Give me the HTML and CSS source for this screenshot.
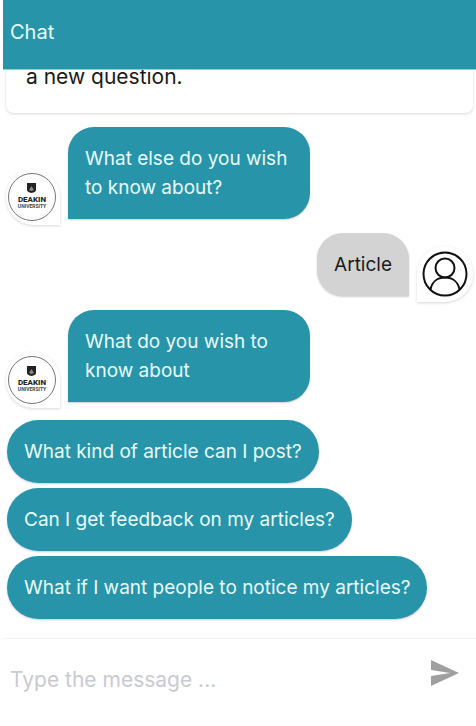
FILE: index.html
```html
<!DOCTYPE html>
<html lang="en">
<head>
  <meta charset="utf-8">
  <meta name="viewport" content="width=device-width, initial-scale=1">
  <title>Chat</title>
  <link rel="stylesheet" href="styles.css">
</head>
<body>
  <main class="chat">
    <header class="chat-header"><h1>Chat</h1></header>
    <section class="messages">
      <p class="card">a new question.</p>
      <div class="row">
        <div class="avatar">
          <svg viewBox="0 0 48 48" role="img" aria-label="Deakin University">
            <circle cx="24" cy="24" r="23.500" fill="#fff" stroke="#777"/>
            <path d="M19 10h9v7q0 2-4.500 3-4.500-1-4.500-3z" fill="#222"/>
            <path d="M21 17l2.500-4 2.500 4-2.500 1z" fill="#888"/>
            <text class="crest-name" x="24" y="29" text-anchor="middle">DEAKIN</text>
            <text class="crest-sub" x="24" y="35" text-anchor="middle">UNIVERSITY</text>
          </svg>
        </div>
        <p class="bubble">What else do you wish to know about?</p>
      </div>
      <div class="row row-user">
        <p class="bubble bubble-user">Article</p>
        <div class="avatar avatar-user">
          <svg viewBox="0 0 48 48" fill="none" stroke="#111" stroke-width="2" aria-hidden="true">
            <circle cx="24" cy="24" r="21.500"/>
            <circle cx="24" cy="18" r="9.500"/>
            <path d="M9.500 39.500C11 31.500 17 27.500 24 27.500s13 4 14.500 12"/>
          </svg>
        </div>
      </div>
      <div class="row">
        <div class="avatar">
          <svg viewBox="0 0 48 48" role="img" aria-label="Deakin University">
            <circle cx="24" cy="24" r="23.500" fill="#fff" stroke="#777"/>
            <path d="M19 10h9v7q0 2-4.500 3-4.500-1-4.500-3z" fill="#222"/>
            <path d="M21 17l2.500-4 2.500 4-2.500 1z" fill="#888"/>
            <text class="crest-name" x="24" y="29" text-anchor="middle">DEAKIN</text>
            <text class="crest-sub" x="24" y="35" text-anchor="middle">UNIVERSITY</text>
          </svg>
        </div>
        <p class="bubble">What do you wish to know about</p>
      </div>
      <div class="options">
        <button type="button">What kind of article can I post?</button>
        <button type="button">Can I get feedback on my articles?</button>
        <button type="button">What if I want people to notice my articles?</button>
      </div>
    </section>
    <form class="composer">
      <input type="text" placeholder="Type the message ..." aria-label="Message">
      <button type="button" aria-label="Send">
        <svg viewBox="0 0 28 26" aria-hidden="true"><path d="M0 0l28 13L0 26V16l19-3L0 10z" fill="#a0a0a0"/></svg>
      </button>
    </form>
  </main>
</body>
</html>
```
FILE: styles.css
```css
* {
  box-sizing: border-box;
}

body {
  margin: 0;
  padding: 0 0 13px 3px;
  height: 100vh;
  background: #fff;
  font: 19px/29px Inter, "Liberation Sans", sans-serif;
  color: #1a1a1a;
}

.chat {
  display: flex;
  flex-direction: column;
  height: 100%;
}

.chat-header {
  padding: 18px 7px 22px;
  background: #2794a9;
  border-bottom: 1px solid #8fd0de;
  color: #e8fcff;
}

h1 {
  margin: 0;
  font-size: 20px;
  font-weight: 400;
}

.messages {
  flex: 1;
  min-height: 0;
  display: flex;
  flex-direction: column;
  justify-content: flex-end;
  gap: 8px;
  padding: 0 3px 19px;
  overflow: hidden;
}

.card {
  margin: 0 0 6px;
  padding: 22px 20px;
  border-radius: 8px;
  box-shadow: 0 1px 3px rgba(0, 0, 0, 0.16);
  font-size: 21px;
}

.row {
  display: flex;
  align-items: flex-end;
  gap: 8px;
}

.row-user {
  justify-content: flex-end;
}

.avatar {
  display: flex;
  padding: 4px 4px 4px 2px;
  border-radius: 50% 50% 0 50%;
  box-shadow: 0 1px 3px rgba(0, 0, 0, 0.16);
}

.avatar svg {
  width: 48px;
  height: 48px;
}

.avatar-user {
  padding: 4px;
  border-radius: 50% 50% 50% 0;
}

.crest-name {
  font: 800 8px Roboto, sans-serif;
  fill: #222;
}

.crest-sub {
  font: 700 5px Roboto, sans-serif;
  fill: #444;
}

.bubble {
  max-width: 242px;
  margin: 0 0 6px;
  padding: 17px;
  border-radius: 26px 26px 26px 0;
  background: #2794a9;
  color: #e8fcff;
  box-shadow: 0 1px 2px rgba(0, 0, 0, 0.2);
}

.bubble-user {
  border-radius: 26px 26px 0 26px;
  background: #d3d3d3;
  color: #1a1a1a;
}

.options {
  display: flex;
  flex-direction: column;
  align-items: flex-start;
  gap: 5px;
  margin: 4px 0 0 1px;
}

.options button {
  padding: 17px;
  border: 0;
  border-radius: 32px;
  background: #2794a9;
  color: #e8fcff;
  font: inherit;
  box-shadow: 0 1px 2px rgba(60, 40, 140, 0.25);
}

.composer {
  display: flex;
  align-items: center;
  padding: 17px 17px 19px 7px;
  border-top: 1px solid #f3f3f5;
}

.composer input {
  flex: 1;
  min-width: 0;
  padding: 9px 0 0;
  border: 0;
  outline: 0;
  background: none;
  color: inherit;
  font: inherit;
  font-size: 21px;
}

.composer input::placeholder {
  color: #c9cad2;
  opacity: 1;
}

.composer button {
  display: flex;
  padding: 0 0 5px;
  border: 0;
  background: none;
}

.composer button svg {
  width: 28px;
  height: 26px;
}
```
